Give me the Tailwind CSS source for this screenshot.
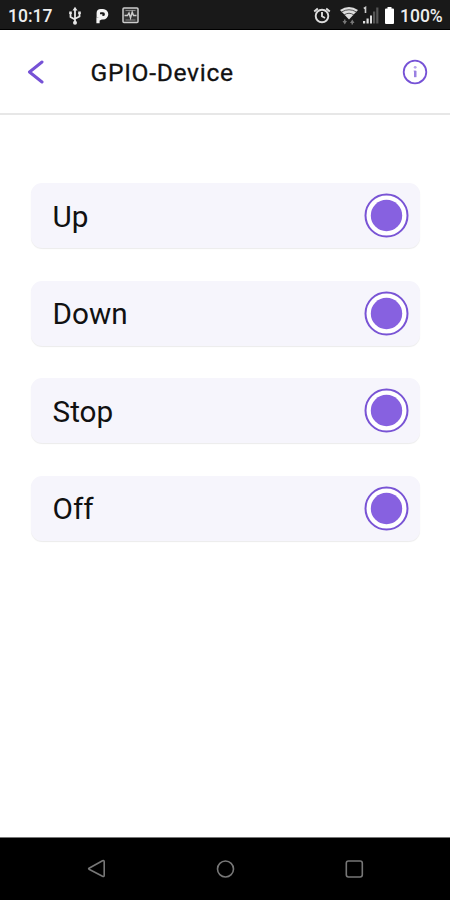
<!DOCTYPE html>
<html lang="en">
<head>
<meta charset="utf-8">
<title>GPIO-Device</title>
<script src="https://cdn.jsdelivr.net/npm/@tailwindcss/browser@4"></script>
</head>
<body class="flex h-[900px] w-[450px] flex-col overflow-hidden bg-white font-['Roboto',sans-serif]">
  <div class="flex h-[30px] shrink-0 items-center border-b border-black bg-[#191919] pt-[2px] text-[17.5px] font-medium leading-none text-[#eee]">
    <span class="ml-[8px] w-[59px] pt-[2px]">10:17</span>
    <svg class="h-[20px] w-[16px]" viewBox="0 0 16 20" fill="none" stroke="#e6e6e6" stroke-width="1.800"><path d="M8 3v13M3.500 7v4L8 13.500M12.500 7v3.500L8 12.800"/><path d="M8 .8l2.500 3.600h-5zM2.200 5.500h2.600v2.400H2.200zM11.200 5.500h2.600v2.400h-2.600z" fill="#e6e6e6" stroke="none"/><circle cx="8" cy="16.700" r="2" fill="#e6e6e6" stroke="none"/></svg>
    <svg class="ml-[12px] h-[16px] w-[15px]" viewBox="0 0 15 16" fill="none" stroke="#f4f4f4"><path d="M3.300 9.600V5Q3.300 2.600 5.700 2.600H8A3.600 3.600 0 0 1 8 9.800H6" stroke-width="3.400"/><path d="M5.800 6.200V8.500Q5.600 11 3 11V15.300" stroke-width="3.200"/></svg>
    <svg class="ml-[12px] h-[17px] w-[17px]" viewBox="0 0 17 17" fill="none" stroke="#ccc" stroke-width="1.500"><rect x="1" y="1" width="15" height="14.500" rx="1" fill="#333"/><path d="M3.500 3.500h10M3.500 13h10" stroke="#888" stroke-width="1"/><path d="M2.500 8.500h3l1.500-2.500 1.500 5 1.700-6 1.300 3.500h3" stroke-width="1.400"/></svg>
    <svg class="ml-auto h-[17px] w-[18px]" viewBox="0 0 18 17" fill="none" stroke="#ddd" stroke-width="1.900"><circle cx="9" cy="9" r="6.300"/><path d="M9 5v4.300l3 1.700M1.200 4.400l3.600-3M16.800 4.400l-3.600-3"/></svg>
    <svg class="ml-[9px] h-[19px] w-[18px]" viewBox="0 0 18 19"><path d="M0 4Q9-2 18 4L9 13.500z" fill="#ddd"/><path d="M1.500 6Q9 1.500 16.500 6M4 9Q9 5.500 14 9" fill="none" stroke="#444" stroke-width=".9"/><path d="M4 13.500h1.500V15H7l-2.200 3.500L2.500 15H4zM11.500 18.500H13V17h1.500l-2.200-3.500L10 17h1.500z" fill="#777"/></svg>
    <svg class="ml-[5px] h-[19px] w-[17px]" viewBox="0 0 17 19"><path d="M.8 2.500L2.500 1.500v5.500" stroke="#ccc" stroke-width="1.600" fill="none"/><path d="M0 15h2.200v2.500H0zM3.500 12.500h2.200v5H3.500zM7 9.500h2v8H7z" fill="#ddd"/><path d="M10 5.500h2.200v12H10zM13.200 1.500h2.200v16h-2.200z" fill="#555"/></svg>
    <svg class="ml-[5px] h-[17px] w-[9px]" viewBox="0 0 9 17" fill="#fff"><path d="M2.500 0h4v1.500H8a1 1 0 0 1 1 1V16a1 1 0 0 1-1 1H1a1 1 0 0 1-1-1V2.500a1 1 0 0 1 1-1h1.500z"/></svg>
    <span class="mr-[7px] ml-[6px] w-[43px] pt-[2px] whitespace-nowrap">100%</span>
  </div>
  <header class="flex h-[85px] shrink-0 items-center border-b-2 border-[#e7e7e7] pr-[22px] pl-[27px]">
    <svg class="h-[24px] w-[17px]" viewBox="0 0 17 24" fill="none" stroke="#7652d6" stroke-width="3" stroke-linecap="round" stroke-linejoin="round"><path d="M15 2L2.500 12L15 22"/></svg>
    <h1 class="ml-[46.500px] pt-[3px] text-[24.600px] font-normal tracking-[0.700px] text-[#111] [-webkit-text-stroke:0.300px_#111]">GPIO-Device</h1>
    <svg class="ml-auto h-[26px] w-[26px]" viewBox="0 0 26 26" fill="none"><circle cx="13" cy="13" r="11.300" stroke="#7652d6" stroke-width="1.800"/><path d="M11.500 12h2.300v6" stroke="#c3b3ee" stroke-width="1"/><path d="M13.200 11.800v6.400" stroke="#9a80e2" stroke-width="2.400"/><circle cx="13.200" cy="8.300" r="1.400" fill="#b7a4ec"/></svg>
  </header>
  <main class="flex flex-1 flex-col gap-[32.600px] pt-[68px] pr-[30px] pl-[31px] text-[29.700px] text-[#111]">
    <section class="flex h-[65px] items-center justify-between rounded-[11px] bg-[#f6f5fc] pr-[11px] pl-[21.500px] shadow-[0_1px_1px_rgba(0,0,0,0.08)]"><span class="pt-[3.500px]">Up</span><svg class="h-[45px] w-[45px]" viewBox="0 0 45 45"><circle cx="22.500" cy="22.500" r="21" fill="#fff" stroke="#7954d5" stroke-width="2"/><circle cx="22.500" cy="22.500" r="15.700" fill="#8761e0"/></svg></section>
    <section class="flex h-[65px] items-center justify-between rounded-[11px] bg-[#f6f5fc] pr-[11px] pl-[21.500px] shadow-[0_1px_1px_rgba(0,0,0,0.08)]"><span class="pt-[3px]">Down</span><svg class="h-[45px] w-[45px]" viewBox="0 0 45 45"><circle cx="22.500" cy="22.500" r="21" fill="#fff" stroke="#7954d5" stroke-width="2"/><circle cx="22.500" cy="22.500" r="15.700" fill="#8761e0"/></svg></section>
    <section class="flex h-[65px] items-center justify-between rounded-[11px] bg-[#f6f5fc] pr-[11px] pl-[21.500px] shadow-[0_1px_1px_rgba(0,0,0,0.08)]"><span class="pt-[2.500px]">Stop</span><svg class="h-[45px] w-[45px]" viewBox="0 0 45 45"><circle cx="22.500" cy="22.500" r="21" fill="#fff" stroke="#7954d5" stroke-width="2"/><circle cx="22.500" cy="22.500" r="15.700" fill="#8761e0"/></svg></section>
    <section class="flex h-[65px] items-center justify-between rounded-[11px] bg-[#f6f5fc] pr-[11px] pl-[21.500px] shadow-[0_1px_1px_rgba(0,0,0,0.08)]"><span class="pt-[1.500px]">Off</span><svg class="h-[45px] w-[45px]" viewBox="0 0 45 45"><circle cx="22.500" cy="22.500" r="21" fill="#fff" stroke="#7954d5" stroke-width="2"/><circle cx="22.500" cy="22.500" r="15.700" fill="#8761e0"/></svg></section>
  </main>
  <nav class="flex h-[63px] shrink-0 items-center justify-between border-t border-[#777] bg-black pr-[86px] pl-[87px]">
    <svg class="h-[20px] w-[20px]" viewBox="0 0 20 20" fill="none" stroke="#777" stroke-width="1.600" stroke-linejoin="round"><path d="M2 9.200L15.500 1.700Q17.200 1 17.200 2.800V16.200Q17.200 18 15.500 17.300L2 10.200Q1.300 9.700 2 9.200z"/></svg>
    <svg class="h-[20px] w-[20px]" viewBox="0 0 20 20" fill="none" stroke="#777" stroke-width="1.600"><circle cx="9.500" cy="10" r="8"/></svg>
    <svg class="h-[20px] w-[20px]" viewBox="0 0 20 20" fill="none" stroke="#777" stroke-width="1.600"><rect x="2.300" y="2" width="16" height="16" rx="2.200"/></svg>
  </nav>
</body>
</html>
